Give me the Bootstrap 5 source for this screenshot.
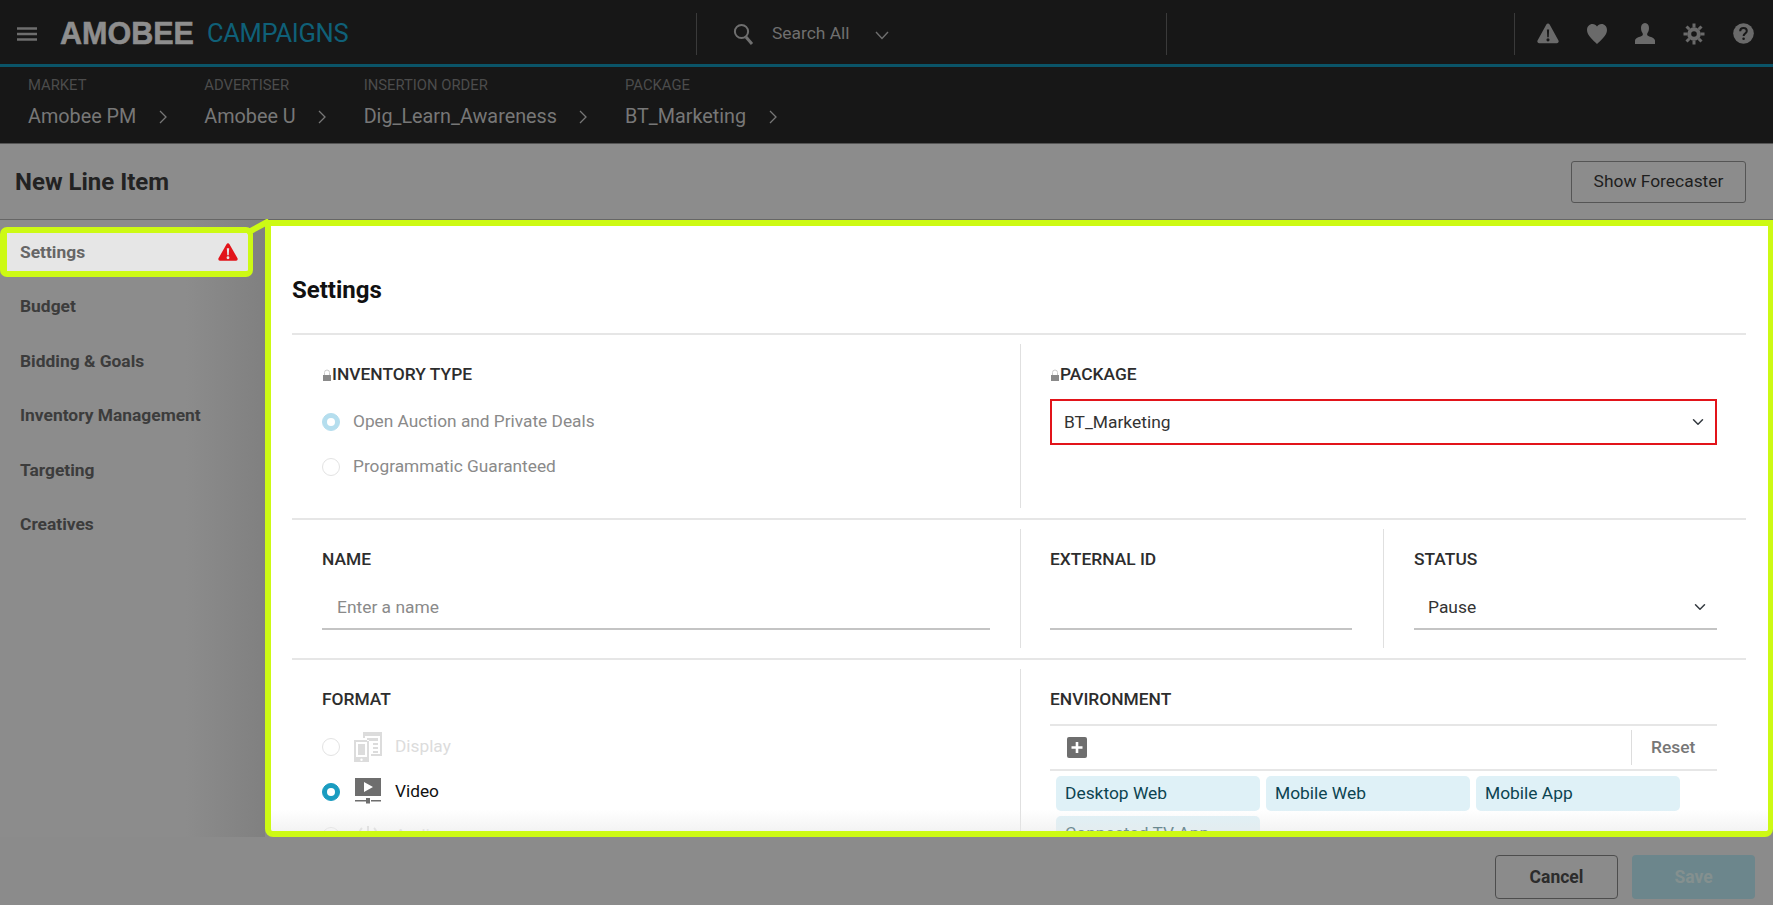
<!DOCTYPE html>
<html lang="en">
<head>
    <meta charset="UTF-8">
    <meta name="viewport" content="width=device-width, initial-scale=1.0">
    <title>New Line Item</title>
    <link rel="stylesheet" href="https://cdn.jsdelivr.net/npm/bootstrap@5.3.0/dist/css/bootstrap.min.css">
    <style>
        html, body { height: 905px; overflow: hidden; }
        body { font-family: Roboto, "Liberation Sans", sans-serif; background: #8b8b8b; color: #333; }
        .topbar { height: 67px; background: #171717; border-bottom: 3px solid #0a5468; padding-top: 3px; }
        .top-left { width: 696px; height: 61px; padding-left: 17px; }
        .top-search { width: 470px; height: 42px; border-left: 1px solid #3a3a3a; padding-left: 36px; color: #6f6f6f; font-size: 17.4px; }
        .search-text { margin: 0 25px 0 18px; }
        .top-mid { width: 348px; height: 42px; border-left: 1px solid #3a3a3a; }
        .top-icons { height: 42px; border-left: 1px solid #3a3a3a; padding-left: 22px; gap: 28px; }
        .logo-main { font-family: "Liberation Sans", sans-serif; font-weight: 700; font-size: 30.5px; color: #8e8e8e; margin-left: 23px; -webkit-text-stroke: .6px #8e8e8e; }
        .logo-sub { font-size: 25.5px; color: #0f6078; margin-left: 13px; letter-spacing: -.3px; }
        .crumbbar { height: 77px; background: #171717; border-bottom: 1px solid #555; padding: 9px 0 0 28px; }
        .crumb-label { font-size: 14.8px; color: #4c4c4c; line-height: 18px; }
        .crumb-value { font-size: 19.8px; color: #777; line-height: 28px; margin-top: 9px; }
        .crumb-value svg { margin-left: 22.5px; }
        .crumb-item { margin-right: 37.5px; }
        .titlebar { height: 76px; border-bottom: 1px solid #666; padding: 0 27px 0 15px; background: #8c8c8c; }
        .title-text { font-size: 24px; font-weight: 700; color: #222; margin: 1px 0 0; }
        .btn-forecast { width: 175px; height: 42px; border: 1px solid #555; border-radius: 3px; color: #1e1e1e; font-size: 17.4px; padding: 0; background: transparent; }
        .side-col { width: 265px; flex-shrink: 0; padding: 7px 12px 0 0; background: linear-gradient(to right, #8c8c8c 70%, #808080); }
        .side-link { height: 54.5px; padding: 0 0 0 20px; font-size: 17.4px; font-weight: 700; color: #3c3c3c; display: flex; align-items: center; }
        .side-active { height: 50px; margin-bottom: 2px; padding: 0 10px 0 13px; background: #e6e6e6; color: #666; border: 7px solid #cdfa14; border-width: 6px 5px 6px 7px; border-radius: 7px; justify-content: space-between; }
        .side-link:hover { color: #3c3c3c; }
        .side-active:hover { color: #666; }
        .connector { position: absolute; left: 247px; top: -1px; }
        .panel-box { flex-grow: 1; min-width: 0; background: #fff; border: 6px solid #cdfa14; border-right-width: 5px; border-radius: 0 0 8px 8px; overflow: hidden; position: relative; }
        .panel-box::after { content: ""; position: absolute; left: 0; right: 0; bottom: 0; height: 22px; background: linear-gradient(to bottom, rgba(232,232,232,0), rgba(232,232,232,.5)); }
        .panel-body { padding: 0 22px 0 21px; }
        .panel-head { height: 109px; padding-top: 46px; border-bottom: 2px solid #e6e6e6; font-size: 24px; font-weight: 700; color: #111; line-height: 36px; margin: 0; }
        .form-sec { padding: 9px 0 10px; border-bottom: 2px solid #e6e6e6; }
        .sec-1 { height: 185px; }
        .sec-2 { height: 140px; }
        .sec-3 { border-bottom: 0; height: 300px; }
        .cell-left { width: 728px; padding: 0 30px; flex-shrink: 0; }
        .cell-right { flex-grow: 1; min-width: 0; padding: 0 29px 0 29px; border-left: 1px solid #e0e0e0; }
        .cell-ext { width: 363px; padding: 0 31px 0 29px; flex-shrink: 0; border-left: 1px solid #e0e0e0; }
        .cell-status { flex-grow: 1; min-width: 0; padding: 0 29px 0 30px; border-left: 1px solid #e0e0e0; }
        .field-label { font-size: 17.4px; font-weight: 500; color: #2d2d2d; line-height: 22px; margin: 19px 0 0; display: flex; align-items: flex-end; }
        .radio-stack { margin-top: 15px; }
        .format-stack { margin-top: 15px; }
        .radio-line { display: flex; align-items: center; height: 44.5px; font-size: 17.3px; color: #8a8a8a; gap: 13px; }
        .form-check-input.radio-dot { width: 18px; height: 18px; margin: 0; flex-shrink: 0; opacity: 1; border: 1px solid #e3e3e3; background-color: #fff; }
        .form-check-input.radio-dot:checked { background-color: #1a9cc0; border-color: #1a9cc0; }
        .form-check-input.radio-soft:checked { background-color: #b5deee; border-color: #b5deee; }
        .form-select.pkg-select { height: 46px; margin-top: 14px; border: 2px solid #e2141a; border-radius: 0; font-size: 17.4px; color: #333; padding: 0 30px 0 12px; box-shadow: none; background-position: right 9px center; }
        .line-field { height: 44px; margin-top: 16px; border: 0; border-bottom: 2px solid #c4c4c4; border-radius: 0; font-size: 17.4px; padding: 0 15px; color: #333; box-shadow: none; background-color: transparent; }
        .line-field::placeholder { color: #8a8a8a; }
        .form-select.line-field { padding: 0 30px 0 14px; background-position: right 9px center; }
        .fmt-icon { width: 28px; flex-shrink: 0; margin-left: 1px; }
        .fmt-off { color: #dcdcdc; }
        .fmt-on { color: #111; }
        .env-tools { height: 47px; margin-top: 14px; border-top: 2px solid #e6e6e6; border-bottom: 2px solid #e6e6e6; padding-left: 17px; }
        .env-reset { width: 86px; height: 35px; margin-left: auto; border-left: 1px solid #ddd; font-size: 17.4px; font-weight: 500; color: #777; padding-left: 19px; }
        .env-chips { gap: 5px 6px; padding: 5px 0 0 6px; }
        .env-chip { width: 204px; height: 35px; padding-left: 9px; background: #dff1f7; border-radius: 5px; font-size: 17.4px; color: #0c4451; display: flex; align-items: center; }
        .footbar { height: 68px; flex-shrink: 0; padding: 18px 18px 0 0; background: #8b8b8b; gap: 14px; }
        .btn-foot { width: 123px; height: 44px; padding: 0; font-size: 17.5px; font-weight: 700; border-radius: 4px; }
        .btn-cancel { border: 1px solid #4d4d4d; color: #2c2c2c; background: transparent; }
        .btn-save { border: 0; background: #6c868c; color: #84908f; }
    </style>
</head>
<body class="d-flex flex-column">

    <!-- top bar -->
    <header class="topbar d-flex align-items-center flex-shrink-0">
        <div class="top-left d-flex align-items-center">
            <svg width="20" height="14" viewBox="0 0 20 14"><path d="M0 1.500h20M0 7h20M0 12.500h20" stroke="#6e6e6e" stroke-width="2.400"/></svg>
            <span class="logo-main">AMOBEE</span>
            <span class="logo-sub">CAMPAIGNS</span>
        </div>
        <div class="top-search d-flex align-items-center">
            <svg width="21" height="22" viewBox="0 0 21 22" fill="none" stroke="#6f6f6f"><circle cx="8.500" cy="8.500" r="6.600" stroke-width="2"/><path d="M13 14l6 7" stroke-width="3"/></svg>
            <span class="search-text">Search All</span>
            <svg class="mt-1" width="14" height="9" viewBox="0 0 14 9" fill="none" stroke="#6f6f6f" stroke-width="1.400"><path d="M1 1l6 6.500L13 1"/></svg>
        </div>
        <div class="top-mid"></div>
        <div class="top-icons d-flex align-items-center">
            <svg width="22" height="21" viewBox="0 0 24 22" fill="#6a6a6a"><path fill-rule="evenodd" d="M12 0c.8 0 1.400.5 1.800 1.200l9.600 17.300c.7 1.400-.1 3-1.700 3H2.300c-1.600 0-2.400-1.600-1.700-3L10.200 1.200C10.600.5 11.200 0 12 0zM10.800 6.500l.4 8.500h1.600l.4-8.500zM12 16.200a1.700 1.700 0 1 0 0 3.400 1.700 1.700 0 0 0 0-3.400z"/></svg>
            <svg width="20" height="20" viewBox="0 0 20 20" fill="#6a6a6a"><path d="M10 20C6 16 0 11.500 0 6 0 2.500 2.500 0 5.500 0 7.500 0 9 1 10 2.600 11 1 12.500 0 14.500 0 17.500 0 20 2.500 20 6c0 5.500-6 10-10 14z"/></svg>
            <svg width="20" height="21" viewBox="0 0 20 21" fill="#6a6a6a"><path d="M10 0c2.600 0 4 2.200 4 5 0 2.400-.9 4.200-1.600 5.300-.5.800-.3 2 .5 2.500 2.500 1.300 6.600 2 7.100 4.700V21H0v-3.500c.5-2.700 4.600-3.400 7.100-4.700.8-.5 1-1.700.5-2.500C6.900 9.200 6 7.400 6 5 6 2.200 7.400 0 10 0z"/></svg>
            <svg width="22" height="22" viewBox="0 0 22 22" fill="none" stroke="#6a6a6a"><circle cx="11" cy="11" r="4.800" stroke-width="4"/><path d="M11 .5v4M11 17.500v4M.5 11h4M17.500 11h4M3.500 3.500 6.300 6.300M15.700 15.700l2.800 2.800M3.500 18.500 6.300 15.700M15.700 6.300l2.800-2.800" stroke-width="3"/></svg>
            <svg width="21" height="21" viewBox="0 0 21 21"><circle cx="10.500" cy="10.500" r="10.300" fill="#6a6a6a"/><path d="M7.200 8.200c0-2 1.400-3.200 3.300-3.200s3.300 1.100 3.300 2.900c0 2.500-3.200 2.700-3.200 5" fill="none" stroke="#171717" stroke-width="2"/><circle cx="10.600" cy="15.700" r="1.300" fill="#171717"/></svg>
        </div>
    </header>

    <!-- breadcrumb -->
    <div class="crumbbar d-flex flex-shrink-0">
        <div class="crumb-item">
            <div class="crumb-label">MARKET</div>
            <div class="crumb-value d-flex align-items-center">Amobee PM<svg width="8" height="14" viewBox="0 0 8 14" fill="none" stroke="#777" stroke-width="1.300"><path d="M1 1l6 6-6 6"/></svg></div>
        </div>
        <div class="crumb-item">
            <div class="crumb-label">ADVERTISER</div>
            <div class="crumb-value d-flex align-items-center">Amobee U<svg width="8" height="14" viewBox="0 0 8 14" fill="none" stroke="#777" stroke-width="1.300"><path d="M1 1l6 6-6 6"/></svg></div>
        </div>
        <div class="crumb-item">
            <div class="crumb-label">INSERTION ORDER</div>
            <div class="crumb-value d-flex align-items-center">Dig_Learn_Awareness<svg width="8" height="14" viewBox="0 0 8 14" fill="none" stroke="#777" stroke-width="1.300"><path d="M1 1l6 6-6 6"/></svg></div>
        </div>
        <div class="crumb-item">
            <div class="crumb-label">PACKAGE</div>
            <div class="crumb-value d-flex align-items-center">BT_Marketing<svg width="8" height="14" viewBox="0 0 8 14" fill="none" stroke="#777" stroke-width="1.300"><path d="M1 1l6 6-6 6"/></svg></div>
        </div>
    </div>

    <!-- page title -->
    <div class="titlebar d-flex align-items-center justify-content-between flex-shrink-0">
        <h1 class="title-text">New Line Item</h1>
        <button class="btn btn-forecast" type="button">Show Forecaster</button>
    </div>

    <div class="d-flex flex-grow-1 position-relative" style="min-height:0">
        <!-- side nav -->
        <nav class="side-col nav flex-column flex-nowrap">
            <a class="nav-link side-link side-active" href="#">Settings
                <svg width="20" height="18" viewBox="0 0 24 21" fill="#e2141a"><path fill-rule="evenodd" d="M12 0c.8 0 1.400.5 1.800 1.200l9.600 16.800c.7 1.400-.1 3-1.700 3H2.300c-1.600 0-2.400-1.600-1.700-3L10.200 1.200C10.600.5 11.200 0 12 0zM10.600 6l.5 8.500h1.800l.5-8.500zM12 15.700a1.700 1.700 0 1 0 0 3.400 1.700 1.700 0 0 0 0-3.400z"/></svg>
            </a>
            <a class="nav-link side-link" href="#">Budget</a>
            <a class="nav-link side-link" href="#">Bidding &amp; Goals</a>
            <a class="nav-link side-link" href="#">Inventory Management</a>
            <a class="nav-link side-link" href="#">Targeting</a>
            <a class="nav-link side-link" href="#">Creatives</a>
        </nav>

        <svg class="connector" width="26" height="20" viewBox="0 0 26 20"><path d="M0 14L22 2" stroke="#cdfa14" stroke-width="6"/></svg>

        <!-- settings panel -->
        <main class="panel-box">
            <div class="panel-body">
                <h2 class="panel-head">Settings</h2>

                <section class="form-sec sec-1 d-flex">
                    <div class="cell-left">
                        <p class="field-label">
                            <svg width="10" height="12" viewBox="0 0 10 12" class="mb-1"><path d="M2.500 6V3.500a2.500 2.500 0 0 1 5 0V6" fill="none" stroke="#ccc" stroke-width="1"/><rect x="1" y="6" width="8" height="6" fill="#8a8a8a"/></svg>INVENTORY TYPE
                        </p>
                        <div class="radio-stack">
                            <label class="radio-line"><input class="form-check-input radio-dot radio-soft" type="radio" name="inv" checked disabled>Open Auction and Private Deals</label>
                            <label class="radio-line"><input class="form-check-input radio-dot" type="radio" name="inv" disabled>Programmatic Guaranteed</label>
                        </div>
                    </div>
                    <div class="cell-right">
                        <p class="field-label">
                            <svg width="10" height="12" viewBox="0 0 10 12" class="mb-1"><path d="M2.500 6V3.500a2.500 2.500 0 0 1 5 0V6" fill="none" stroke="#ccc" stroke-width="1"/><rect x="1" y="6" width="8" height="6" fill="#8a8a8a"/></svg>PACKAGE
                        </p>
                        <select class="form-select pkg-select"><option>BT_Marketing</option></select>
                    </div>
                </section>

                <section class="form-sec sec-2 d-flex">
                    <div class="cell-left">
                        <p class="field-label">NAME</p>
                        <input class="form-control line-field" type="text" placeholder="Enter a name">
                    </div>
                    <div class="cell-ext">
                        <p class="field-label">EXTERNAL ID</p>
                        <input class="form-control line-field" type="text">
                    </div>
                    <div class="cell-status">
                        <p class="field-label">STATUS</p>
                        <select class="form-select line-field"><option>Pause</option></select>
                    </div>
                </section>

                <section class="form-sec sec-3 d-flex">
                    <div class="cell-left">
                        <p class="field-label">FORMAT</p>
                        <div class="format-stack">
                            <label class="radio-line fmt-off"><input class="form-check-input radio-dot" type="radio" name="fmt" disabled>
                                <svg class="fmt-icon" height="30" viewBox="0 0 28 30" fill="#dcdcdc"><path fill-rule="evenodd" d="M9 0h19v24H17v-2h9V4H11v2H9zM13 6h11v3H13zM19 11h5v2h-5zM19 15h5v2h-5zM19 19h5v2h-5zM0 8h15v22H0zM2 10v15h11V10zM4 12h7v11H4zM7.500 26.500a1.200 1.200 0 1 0 0 2.400 1.200 1.200 0 0 0 0-2.400z"/></svg>
                                Display</label>
                            <label class="radio-line fmt-on"><input class="form-check-input radio-dot" type="radio" name="fmt" checked>
                                <svg class="fmt-icon" height="27" viewBox="0 0 28 27" fill="#6e6e6e"><path fill-rule="evenodd" d="M1 0h26v18H1zM10 4v10l9-5z"/><rect x="1" y="22" width="11" height="1.500"/><rect x="12" y="20" width="4" height="5.500"/><rect x="17" y="22" width="10" height="1.500"/></svg>
                                Video</label>
                            <label class="radio-line fmt-off"><input class="form-check-input radio-dot" type="radio" name="fmt" disabled>
                                <svg class="fmt-icon" height="24" viewBox="0 0 28 24" fill="none" stroke="#dcdcdc" stroke-width="2"><path d="M8 4a10 10 0 0 0 0 14M20 4a10 10 0 0 1 0 14M14 2v20"/></svg>
                                Audio</label>
                        </div>
                    </div>
                    <div class="cell-right">
                        <p class="field-label">ENVIRONMENT</p>
                        <div class="env-tools d-flex align-items-center">
                            <svg width="20" height="21" viewBox="0 0 20 21"><rect width="20" height="21" rx="2" fill="#6e6e6e"/><path d="M10 5v11M4.500 10.500h11" stroke="#fff" stroke-width="2.600"/></svg>
                            <div class="env-reset d-flex align-items-center">Reset</div>
                        </div>
                        <div class="env-chips d-flex flex-wrap">
                            <span class="env-chip">Desktop Web</span>
                            <span class="env-chip">Mobile Web</span>
                            <span class="env-chip">Mobile App</span>
                            <span class="env-chip">Connected TV App</span>
                        </div>
                    </div>
                </section>
            </div>
        </main>
    </div>

    <!-- footer buttons -->
    <footer class="footbar d-flex justify-content-end">
        <button class="btn btn-foot btn-cancel" type="button">Cancel</button>
        <button class="btn btn-foot btn-save" type="button">Save</button>
    </footer>

</body>
</html>
